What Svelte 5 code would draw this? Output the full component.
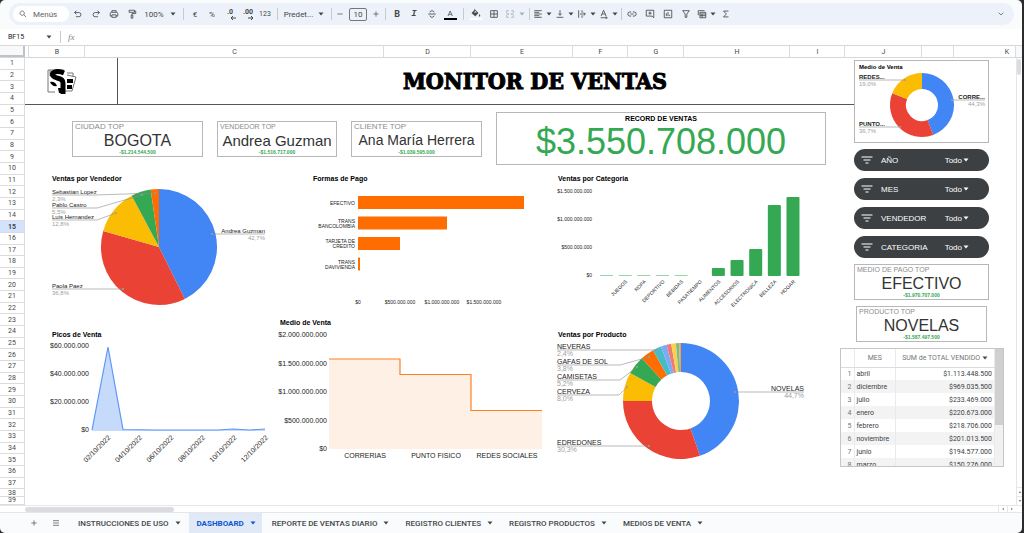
<script lang="ts">
    type Slice = { value: number; color: string };
    type Callout = { name: string; pct: string; points: number[][]; right?: boolean };

    const columns = [
        ["", 4], ["B", 56], ["C", 299], ["D", 87], ["E", 102], ["F", 55],
        ["G", 56], ["H", 106], ["I", 55], ["J", 77], ["", 32], ["K", 62],
    ];
    const rows = Array.from({ length: 39 }, (_, i) => i + 1);

    const kpis = [
        { label: "CIUDAD TOP", value: "BOGOTA", note: "-$1.214.544.500" },
        { label: "VENDEDOR TOP", value: "Andrea Guzman", note: "-$1.516.717.000", tight: true },
        { label: "CLIENTE TOP", value: "Ana María Herrera", note: "-$1.039.595.000", small: true },
    ];

    const sellers: Slice[] = [
        { value: 42.7, color: "#4285f4" },
        { value: 36.8, color: "#ea4335" },
        { value: 12.8, color: "#fbbc04" },
        { value: 5.5, color: "#34a853" },
        { value: 2.3, color: "#ff6d01" },
    ];
    const sellerCallouts: Callout[] = [
        { name: "Sebastian Lopez", pct: "2,3%", points: [[2, 10], [45, 10], [105, 8]] },
        { name: "Pablo Castro", pct: "5,5%", points: [[2, 23], [47, 23], [92, 10]] },
        { name: "Luis Hernandez", pct: "12,8%", points: [[2, 35], [47, 35], [66, 28]] },
        { name: "Paola Paez", pct: "36,8%", points: [[2, 104], [73, 104]] },
        { name: "Andrea Guzman", pct: "42,7%", points: [[215, 49], [162, 49]], right: true },
    ];

    const products: Slice[] = [
        { value: 44.7, color: "#4285f4" },
        { value: 30.3, color: "#ea4335" },
        { value: 8, color: "#fbbc04" },
        { value: 5.2, color: "#34a853" },
        { value: 3.8, color: "#ff6d01" },
        { value: 2.4, color: "#46bdc6" },
        { value: 1.6, color: "#7baaf7" },
        { value: 1.3, color: "#f07b72" },
        { value: 1.3, color: "#fcd04f" },
        { value: 0.9, color: "#71c287" },
        { value: 0.5, color: "#ff994d" },
    ];
    const productCallouts: Callout[] = [
        { name: "NEVERAS", pct: "2,4%", points: [[1, 9], [102, 9]] },
        { name: "GAFAS DE SOL", pct: "3,8%", points: [[1, 24], [64, 24], [93, 16]] },
        { name: "CAMISETAS", pct: "5,2%", points: [[1, 39], [64, 39], [81, 26]] },
        { name: "CERVEZA", pct: "8,0%", points: [[1, 54], [63, 54], [71, 46]] },
        { name: "EDREDONES", pct: "30,3%", points: [[1, 105], [93, 105]] },
        { name: "NOVELAS", pct: "44,7%", points: [[248, 51], [179, 51]], right: true },
    ];

    const channels: Slice[] = [
        { value: 44.3, color: "#4285f4" },
        { value: 36.7, color: "#ea4335" },
        { value: 19, color: "#fbbc04" },
    ];
    const channelCallouts: Callout[] = [
        { name: "REDES...", pct: "19,0%", points: [[4, 7], [50, 7]] },
        { name: "PUNTO...", pct: "36,7%", points: [[4, 54], [45, 54]] },
        { name: "CORRE...", pct: "44,3%", points: [[130, 27], [97, 27]], right: true },
    ];

    const payments = [
        { lines: ["EFECTIVO"], width: 166 },
        { lines: ["TRANS", "BANCOLOMBIA"], width: 89 },
        { lines: ["TARJETA DE", "CREDITO"], width: 42 },
        { lines: ["TRANS", "DAVIVIENDA"], width: 2 },
    ];

    const categories = [
        { name: "", h: 0.5 },
        { name: "JUEGOS", h: 0.5 },
        { name: "ROPA", h: 0.5 },
        { name: "DEPORTIVO", h: 0.5 },
        { name: "BEBIDAS", h: 0.5 },
        { name: "PASATIEMPO", h: 0 },
        { name: "ALIMENTOS", h: 8 },
        { name: "ACCESORIOS", h: 16 },
        { name: "ELECTRONICA", h: 27 },
        { name: "BELLEZA", h: 71 },
        { name: "HOGAR", h: 79 },
    ];

    const dates = ["02/10/2022", "04/10/2022", "06/10/2022", "08/10/2022", "10/10/2022", "12/10/2022"];
    const peaks = "42,89 58,6 73,88.5 105,89 168,89 183,88 200,89 215,88";

    const filters = ["AÑO", "MES", "VENDEDOR", "CATEGORIA"];

    const months = [
        ["abril", "$1.113.448.500"],
        ["diciembre", "$969.035.500"],
        ["julio", "$233.469.000"],
        ["enero", "$220.673.000"],
        ["febrero", "$218.706.000"],
        ["noviembre", "$201.013.500"],
        ["junio", "$194.577.000"],
        ["marzo", "$150.276.000"],
    ];

    const tabs = [
        "INSTRUCCIONES DE USO",
        "DASHBOARD",
        "REPORTE DE VENTAS DIARIO",
        "REGISTRO CLIENTES",
        "REGISTRO PRODUCTOS",
        "MEDIOS DE VENTA",
    ];
    let activeTab = $state("DASHBOARD");

    // toolbar glyphs on a 24 unit grid
    const icons: Record<string, string> = {
        undo: "M8 4L4 8.500l4 4.500M4 8.500h10a5 5 0 0 1 0 10H7",
        redo: "M16 4l4 4.500-4 4.500M20 8.500H10a5 5 0 0 0 0 10h7",
        print: "M7 8V4h10v4M7 17H3v-6q0-3 3-3h12q3 0 3 3v6h-4M7 14h10v6H7z",
        paint: "M5 3h13v5H5zM18 5h3v6h-9v4M10 15h4v7h-4z",
        strike: "M3 12h18M17 8q-1-4-5-4t-5 4M7 16q1 4 5 4t5-4",
        borders: "M4 4h16v16H4zM12 4v16M4 12h16",
        merge: "M9 4H4v5M15 4h5v5M9 20H4v-5M15 20h5v-5M3 12h6M21 12h-6M7 10l2 2-2 2M17 10l-2 2 2 2",
        align: "M3 4h18M3 8h12M3 12h18M3 16h12M3 20h18",
        valign: "M4 20h16M12 3v12M8 11l4 4 4-4",
        wrap: "M4 3v18M12 3v6M12 15v6M7 12h13M16 8l4 4-4 4",
        rotate: "M5 17l6-14 6 14M7 12h8M4 21h15M16 18l4 3-4 2",
        link: "M10 7H7a5 5 0 0 0 0 10h3M14 7h3a5 5 0 0 1 0 10h-3M8 12h8",
        comment: "M3 3h18v18l-4-4H3zM12 6v8M8 10h8",
        chart: "M3 3h18v18H3zM8 17v-7M12 17V7M16 17v-3",
        filter: "M4 4h16l-6 8v8h-4v-8z",
        views: "M3 15V4h15M7 8h14v13H7zM7 12h14M7 16h14M12 12v9",
        sum: "M18 5H6l7 7-7 7h12",
        plus: "M12 4v16M4 12h16",
        minus: "M4 12h16",
        menu: "M3 5h18M3 12h18M3 19h18",
        search: "M9.500 3a6.500 6.500 0 1 0 .1 0M14 14l7 7",
        chevron: "M5 8l7 7 7-7",
    };

    function arc(cx: number, cy: number, r: number, hole: number, list: Slice[]) {
        const total = list.reduce((sum, s) => sum + s.value, 0);
        let from = 0;
        return list.map((s) => {
            const a = (from / total) * Math.PI * 2;
            from += s.value;
            const b = (from / total) * Math.PI * 2;
            const big = b - a > Math.PI ? 1 : 0;
            const at = (radius: number, angle: number) =>
                `${(cx + radius * Math.sin(angle)).toFixed(2)} ${(cy - radius * Math.cos(angle)).toFixed(2)}`;
            const d = `M${at(r, a)}A${r} ${r} 0 ${big} 1 ${at(r, b)}L${at(hole, b)}A${hole} ${hole} 0 ${big} 0 ${at(hole, a)}Z`;
            return { d, color: s.color };
        });
    }
</script>

{#snippet icon(name: string)}
    <svg class="icon" viewBox="0 0 24 24" aria-hidden="true"><path d={icons[name]} /></svg>
{/snippet}

{#snippet caret()}
    <svg class="caret" viewBox="0 0 6 4" aria-hidden="true"><path d="M0.500 0.500h5L3 3.500z" /></svg>
{/snippet}

{#snippet tool(name: string, label: string)}
    <button class="tool" aria-label={label}>{@render icon(name)}</button>
{/snippet}

{#snippet dropTool(name: string, label: string)}
    <button class="drop" aria-label={label}>{@render icon(name)}{@render caret()}</button>
{/snippet}

{#snippet pie(cx: number, cy: number, r: number, hole: number, slices: Slice[], callouts: Callout[])}
    {#each arc(cx, cy, r, hole, slices) as slice}
        <path d={slice.d} fill={slice.color} />
    {/each}
    {#each callouts as c}
        {@const start = c.points[0]}
        {@const end = c.points[c.points.length - 1]}
        <polyline class="leader" points={c.points.join(" ")} />
        <circle cx={end[0]} cy={end[1]} r="1" fill="#9e9e9e" />
        <text class="name" class:end={c.right} x={start[0]} y={start[1] - 1}>{c.name}</text>
        <text class="pct" class:end={c.right} x={start[0]} y={start[1] + 6}>{c.pct}</text>
    {/each}
{/snippet}

<div class="window">
    <header class="toolbar">
        <label class="search">
            {@render icon("search")}
            <input type="text" placeholder="Menús" aria-label="Menús" />
        </label>
        {@render tool("undo", "Deshacer")}
        {@render tool("redo", "Rehacer")}
        {@render tool("print", "Imprimir")}
        {@render tool("paint", "Copiar formato")}
        <button class="zoom">100%{@render caret()}</button>
        <span class="sep"></span>
        <button class="tool narrow">€</button>
        <button class="tool">%</button>
        <button class="tool dec">.0<svg viewBox="0 0 6 4" aria-hidden="true"><path d="M6 2H1M3 0L1 2l2 2" /></svg></button>
        <button class="tool dec">.00<svg viewBox="0 0 6 4" aria-hidden="true"><path d="M0 2h5M3 0l2 2-2 2" /></svg></button>
        <button class="tool narrow num">123</button>
        <span class="sep"></span>
        <button class="font">Predet...{@render caret()}</button>
        <span class="sep"></span>
        <button class="step" aria-label="Reducir">{@render icon("minus")}</button>
        <input class="size" type="text" value="10" aria-label="Tamaño de fuente" />
        <button class="step" aria-label="Aumentar">{@render icon("plus")}</button>
        <span class="sep"></span>
        <button class="tool narrow letter">B</button>
        <button class="tool letter italic">I</button>
        {@render tool("strike", "Tachado")}
        <button class="tool color"><span>A</span></button>
        <span class="sep"></span>
        <button class="tool" aria-label="Color de relleno">
            <svg class="fill" viewBox="0 0 24 24" aria-hidden="true">
                <path d="M8 1l9 9-6.500 6.500L3 10l6-6zM19 12q3 4 0 5t0-5z" fill="#444746" />
                <path d="M7 9h7l-3-3z" fill="#edf2fa" />
                <path d="M0 20h24v4H0z" fill="#fff" />
            </svg>
        </button>
        {@render tool("borders", "Bordes")}
        <button class="merge" aria-label="Combinar celdas" disabled>{@render icon("merge")}{@render caret()}</button>
        <span class="sep thin"></span>
        {@render dropTool("align", "Alineación horizontal")}
        {@render dropTool("valign", "Alineación vertical")}
        {@render dropTool("wrap", "Ajuste de texto")}
        {@render dropTool("rotate", "Rotación de texto")}
        <span class="sep thin"></span>
        {@render tool("link", "Insertar enlace")}
        {@render tool("comment", "Insertar comentario")}
        {@render tool("chart", "Insertar gráfico")}
        {@render tool("filter", "Crear un filtro")}
        {@render dropTool("views", "Vistas de tabla")}
        {@render tool("sum", "Funciones")}
        <button class="tool collapse" aria-label="Ocultar menús">{@render icon("chevron")}</button>
    </header>

    <div class="formula">
        <input class="cell-name" type="text" value="BF15" aria-label="Cuadro de nombre" />
        {@render caret()}
        <span class="sep"></span>
        <label class="fx" for="fx">fx</label>
        <input id="fx" type="text" />
    </div>

    <div class="columns">
        <div class="corner"></div>
        <div class="cols">
            {#each columns as [name, size]}
                <div class="col" class:last={name === "K"} style="flex-grow: {size}">{name}</div>
            {/each}
        </div>
        <div class="gutter"></div>
    </div>

    <div class="sheet">
        <div class="rows">
            {#each rows as n}
                <div class="row" class:selected={n === 15} class:short={n > 37}>{n}</div>
            {/each}
        </div>

        <main>
            <div class="band">
                <div class="logo">
                    <svg viewBox="0 0 30 26" aria-label="SF">
                        <path d="M1 1L17 1M1 1v22h7M15 22h10l4-14-9-2M20 4h6v4M3 1v6" fill="none" stroke="#777" />
                        <path d="M17 4q-7-3-11 0-2 3 4 5 6 1 6 5v11" fill="none" stroke="#000" stroke-width="5" />
                        <path d="M3 13q5-1 7 4-5 1-7-4zM20 10h6v4h-6zM20 16h5v4h-5zM11 19h4v5h-3z" />
                    </svg>
                </div>
                <h1>MONITOR DE VENTAS</h1>
            </div>

            <div class="kpis">
                {#each kpis as k}
                    <section class="card">
                        <h2 class:tight={k.tight}>{k.label}</h2>
                        <p class="value" class:medium={k.tight} class:small={k.small}>{k.value}</p>
                        <p class="note">{k.note}</p>
                    </section>
                {/each}
                <section class="card record">
                    <h2>RECORD DE VENTAS</h2>
                    <p>$3.550.708.000</p>
                </section>
            </div>

            <div class="charts">
                <section class="chart small">
                    <h3>Ventas por Vendedor</h3>
                    <svg viewBox="0 0 228 132">
                        {@render pie(109, 62, 58, 0, sellers, sellerCallouts)}
                    </svg>
                </section>

                <section class="chart tiny formas">
                    <h3>Formas de Pago</h3>
                    <svg viewBox="0 0 278 132">
                        {#each payments as p, i}
                            {@const y = 11 + i * 20.5}
                            <rect x="80" {y} width={p.width} height="13" rx="0.500" fill="#ff6d01" />
                            {#each p.lines as line, j}
                                <text class="end" x="77" y={y + 8.5 + (j * 5 - (p.lines.length - 1) * 2.5)}>{line}</text>
                            {/each}
                        {/each}
                        {#each ["$0", "$500.000.000", "$1.000.000.000", "$1.500.000.000"] as tick, i}
                            <text class="mid" x={80 + i * 42} y="119">{tick}</text>
                        {/each}
                    </svg>
                </section>

                <section class="chart tiny">
                    <h3>Ventas por Categoria</h3>
                    <svg viewBox="0 0 284 132">
                        {#each ["$1.500.000.000", "$1.000.000.000", "$500.000.000", "$0"] as tick, i}
                            <text class="end" x="36" y={8 + i * 28}>{tick}</text>
                        {/each}
                        {#each categories as c, i}
                            {@const x = 44 + i * 18.65}
                            <rect {x} y={91 - c.h} width="13" height={c.h} rx={c.h > 1 ? 1 : 0} fill="#34a853" />
                            <text class="end" transform="translate({x + 9} 97) rotate(-45)">{c.name}</text>
                        {/each}
                    </svg>
                </section>

                <section class="chart lower">
                    <h3>Picos de Venta</h3>
                    <svg viewBox="0 0 228 130">
                        {#each ["$60.000.000", "$40.000.000", "$20.000.000", "$0"] as tick, i}
                            <text class="end" x="39" y={7 + i * 28}>{tick}</text>
                        {/each}
                        <polygon points="{peaks} 215,90 42,90" fill="#c6dafc" />
                        <polyline points={peaks} fill="none" stroke="#5c97f6" stroke-width="1.200" />
                        {#each dates as date, i}
                            <text class="end" transform="translate({61 + i * 31.5} 97) rotate(-45)">{date}</text>
                        {/each}
                    </svg>
                </section>

                <section class="chart">
                    <h3>Medio de Venta</h3>
                    <svg viewBox="0 0 278 135">
                        {#each ["$2.000.000.000", "$1.500.000.000", "$1.000.000.000", "$500.000.000", "$0"] as tick, i}
                            <text class="end" x="49" y={8 + i * 28.5}>{tick}</text>
                        {/each}
                        <path d="M51 120V30h71v15.500h71v36h71V120z" fill="#fff0e6" />
                        <path d="M51 30h71v15.500h71v36h71" fill="none" stroke="#ff7f20" stroke-width="1.200" />
                        {#each ["CORRERIAS", "PUNTO FISICO", "REDES SOCIALES"] as name, i}
                            <text class="mid" x={87 + i * 71} y="129">{name}</text>
                        {/each}
                    </svg>
                </section>

                <section class="chart lower">
                    <h3>Ventas por Producto</h3>
                    <svg viewBox="0 0 284 130">
                        {@render pie(125, 60, 58, 29, products, productCallouts)}
                    </svg>
                </section>
            </div>
        </main>

        <aside>
            <section class="card chart small channel">
                <h3>Medio de Venta</h3>
                <svg viewBox="0 0 133 70">
                    {@render pie(67, 32, 32, 16, channels, channelCallouts)}
                </svg>
            </section>

            <div class="filters">
                {#each filters as f}
                    <button>
                        <svg viewBox="0 0 12 8" aria-hidden="true"><path d="M0.500 1h11M2.500 4h7M4.500 7h3" /></svg>
                        <span class="field">{f}</span>
                        <span class="pick">Todo{@render caret()}</span>
                    </button>
                {/each}
            </div>

            <section class="card">
                <h2 class="tight">MEDIO DE PAGO TOP</h2>
                <p class="value">EFECTIVO</p>
                <p class="note">-$1.970.707.000</p>
            </section>
            <section class="card product">
                <h2 class="tight">PRODUCTO TOP</h2>
                <p class="value">NOVELAS</p>
                <p class="note">-$1.587.497.500</p>
            </section>

            <div class="months">
                <table>
                    <thead>
                        <tr><th></th><th>MES</th><th class="total">SUM de TOTAL VENDIDO {@render caret()}</th></tr>
                    </thead>
                    <tbody>
                        {#each months as [month, total], i}
                            <tr><td class="index">{i + 1}</td><td>{month}</td><td class="total">{total}</td></tr>
                        {/each}
                    </tbody>
                </table>
                <div class="track"><div class="thumb"></div></div>
            </div>
        </aside>

        <div class="vscroll">
            <div class="thumb"></div>
            <button aria-label="Subir"><svg viewBox="0 0 6 4"><path d="M1 3h4L3 1z" /></svg></button>
            <button aria-label="Bajar"><svg viewBox="0 0 6 4"><path d="M1 1h4L3 3z" /></svg></button>
        </div>
    </div>

    <div class="hscroll">
        <div class="thumb"></div>
        <button aria-label="Izquierda"><svg viewBox="0 0 4 6"><path d="M3 1v4L1 3z" /></svg></button>
        <button aria-label="Derecha"><svg viewBox="0 0 4 6"><path d="M1 1v4l2-2z" /></svg></button>
    </div>

    <nav>
        <button class="sheet-tool" aria-label="Añadir hoja">{@render icon("plus")}</button>
        <button class="sheet-tool" aria-label="Todas las hojas">{@render icon("menu")}</button>
        {#each tabs as tab}
            <button class="tab" class:active={tab === activeTab} onclick={() => (activeTab = tab)}>
                {tab}{@render caret()}
            </button>
        {/each}
    </nav>
</div>

<style>
    :global(body) {
        margin: 0;
        background: #2b2c2e;
    }

    .window {
        min-height: 100vh;
        margin-right: 2px;
        box-sizing: border-box;
        display: flex;
        flex-direction: column;
        overflow: hidden;
        border-radius: 5px;
        background: #f9fbfd;
        color: #444746;
        font-family: Roboto, "Liberation Sans", sans-serif;
        font-size: 8px;
    }

    .window * {
        box-sizing: border-box;
    }

    button,
    input {
        min-width: 0;
        margin: 0;
        padding: 0;
        border: 0;
        background: none;
        color: inherit;
        font: inherit;
    }

    button {
        display: flex;
        align-items: center;
        justify-content: center;
        cursor: pointer;
    }

    h1,
    h2,
    h3,
    p {
        margin: 0;
        font-weight: normal;
    }

    svg {
        display: block;
        flex: none;
    }

    .icon {
        width: 10px;
        height: 10px;
        fill: none;
        stroke: #444746;
        stroke-width: 2;
    }

    .caret {
        width: 6px;
        height: 4px;
        fill: #444746;
    }

    /* toolbar */
    .toolbar {
        display: flex;
        align-items: center;
        height: 22px;
        margin: 3px 8px 4px 9px;
        padding: 0 4px;
        border-radius: 11px;
        background: #edf2fa;
    }

    .toolbar button {
        height: 16px;
    }

    .search {
        display: flex;
        align-items: center;
        gap: 6px;
        width: 56px;
        height: 16px;
        padding-left: 6px;
        border-radius: 8px;
        background: #fff;
    }

    .search .icon {
        width: 8px;
        height: 8px;
    }

    .search input {
        width: 32px;
    }

    .search input::placeholder {
        color: #5f6368;
        opacity: 1;
    }

    .tool {
        width: 18px;
    }

    .narrow {
        width: 16px;
    }

    .zoom {
        width: 38px;
        gap: 6px;
    }

    .font {
        width: 46px;
        gap: 5px;
    }

    .sep {
        flex: none;
        width: 8px;
        height: 12px;
        background: linear-gradient(#c7cbd1, #c7cbd1) center / 1px 100% no-repeat;
    }

    .thin {
        width: 4px;
    }

    .dec {
        flex-direction: column;
        font-weight: bold;
        font-size: 7px;
        line-height: 7px;
    }

    .dec svg {
        width: 6px;
        height: 4px;
        margin-left: 6px;
        fill: none;
        stroke: #444746;
    }

    .num {
        font-size: 7px;
    }

    .step {
        width: 10px;
    }

    .step .icon {
        width: 8px;
        height: 8px;
    }

    .size {
        width: 18px;
        height: 13px;
        margin: 0 4px;
        border: 1px solid #747775;
        border-radius: 2px;
        text-align: center;
    }

    .letter {
        font-weight: bold;
        font-size: 9px;
    }

    .italic {
        font-family: "Liberation Mono", monospace;
        font-style: italic;
    }

    .color span {
        width: 13px;
        border-bottom: 2px solid #000;
        font-size: 8px;
        line-height: 9px;
    }

    .fill {
        width: 12px;
        height: 12px;
    }

    .merge {
        width: 24px;
        gap: 4px;
        opacity: 0.4;
    }

    .drop {
        width: 22px;
        gap: 3px;
    }

    .collapse {
        margin-left: auto;
    }

    .collapse .icon {
        width: 8px;
    }

    /* formula bar */
    .formula {
        display: flex;
        align-items: center;
        height: 16px;
        padding-left: 8px;
        background: #fff;
        font-size: 7px;
    }

    .cell-name {
        width: 38px;
        color: #202124;
    }

    .formula .sep {
        margin: 0 4px;
    }

    .fx {
        width: 16px;
        color: #80868b;
        font: italic 9px "Liberation Serif", serif;
    }

    #fx {
        flex: 1;
    }

    /* grid headers */
    .columns {
        display: flex;
        height: 13px;
        border-top: 1px solid #d5d7d9;
        border-bottom: 1px solid #d5d7d9;
        background: #fff;
        font-size: 7px;
        line-height: 12px;
        text-align: center;
    }

    .corner {
        width: 25px;
        border-right: 2px solid #c0c2c4;
        border-bottom: 2px solid #c0c2c4;
        background: #f8f9fa;
    }

    .cols {
        flex: 1;
        display: flex;
    }

    .col {
        flex: 1 1 0;
        min-width: 0;
        box-shadow: inset -1px 0 #dadce0;
    }

    .col.last {
        text-indent: 44px;
    }

    .gutter {
        width: 6px;
        background: #f8f9fa;
    }

    .sheet {
        flex: 1;
        display: flex;
        background: #fff;
    }

    .rows {
        display: flex;
        flex-direction: column;
        width: 25px;
        border-right: 1px solid #dadce0;
        font-size: 7px;
    }

    .row {
        flex: 12 1 0;
        min-height: 0;
        display: flex;
        align-items: center;
        justify-content: center;
        box-shadow: inset 0 -1px #dadce0;
        line-height: 7px;
    }

    .row.short {
        flex-grow: 8;
    }

    .selected {
        background: #d3e3fd;
        font-weight: bold;
    }

    main,
    aside {
        font-family: "Liberation Sans", Arial, sans-serif;
    }

    main {
        flex: 1;
        min-width: 0;
    }

    .band {
        display: flex;
        height: 47px;
        margin-right: -14px;
        border-bottom: 1px solid #555;
    }

    .logo {
        width: 93px;
        padding: 11px 0 0 22px;
        border-right: 1px solid #555;
    }

    .logo svg {
        width: 30px;
        height: 26px;
    }

    h1 {
        flex: 1;
        padding-left: 98px;
        color: #000;
        font-family: "DejaVu Serif Condensed", "DejaVu Serif", serif;
        font-size: 23px;
        font-weight: bold;
        line-height: 46px;
        text-align: center;
        white-space: nowrap;
        -webkit-text-stroke: 1px #000;
    }

    .kpis {
        display: grid;
        grid-template-columns: 131fr 120fr 131fr 330fr;
        align-items: center;
        gap: 14px;
        margin: 7px 14px 8px 47px;
    }

    .card {
        height: 36px;
        border: 1px solid #b7b7b7;
        background: #fff;
        text-align: center;
        white-space: nowrap;
    }

    .card h2 {
        padding-left: 2px;
        color: #8c8c8c;
        font-size: 8px;
        line-height: 10px;
        text-align: left;
    }

    .card h2.tight {
        font-size: 7px;
    }

    .value {
        color: #333;
        font-size: 16px;
        line-height: 17px;
    }

    .value.medium {
        font-size: 15px;
    }

    .value.small {
        font-size: 14px;
    }

    .note {
        color: #34a853;
        font-size: 5px;
        font-weight: bold;
        line-height: 6px;
    }

    .card.record {
        height: 53px;
    }

    .record h2 {
        padding: 0;
        color: #000;
        font-size: 7px;
        font-weight: bold;
        line-height: 11px;
        text-align: center;
    }

    .record p {
        color: #34a853;
        font-size: 36px;
        line-height: 36px;
    }

    /* charts */
    .charts {
        display: grid;
        grid-template-columns: 228fr 278fr 284fr;
        align-items: start;
        padding-left: 25px;
    }

    .chart {
        min-width: 0;
    }

    .chart h3 {
        padding-left: 2px;
        color: #000;
        font-size: 7px;
        font-weight: bold;
        line-height: 12px;
        text-align: left;
    }

    .formas h3 {
        padding-left: 35px;
    }

    .lower {
        padding-top: 12px;
    }

    .chart svg {
        width: 100%;
        height: auto;
        overflow: visible;
    }

    text {
        fill: #222;
        font-size: 7px;
    }

    .small text {
        font-size: 6px;
    }

    .tiny text {
        font-size: 5px;
    }

    text.pct {
        fill: #9e9e9e;
    }

    .end {
        text-anchor: end;
    }

    .mid {
        text-anchor: middle;
    }

    .leader {
        fill: none;
        stroke: #8c8c8c;
        stroke-width: 0.6;
    }

    /* right side */
    aside {
        display: flex;
        flex-direction: column;
        gap: 6px;
        width: 176px;
        padding: 2px 27px 0 14px;
    }

    .card.channel {
        position: relative;
        height: 83px;
    }

    .channel h3 {
        padding-left: 4px;
        font-size: 6px;
    }

    .channel .name {
        font-weight: bold;
    }

    .filters {
        display: flex;
        flex-direction: column;
        gap: 7px;
    }

    .filters button {
        height: 22px;
        padding: 0 20px 0 7px;
        border-radius: 11px;
        background: #3c4043;
        color: #fff;
    }

    .filters button > svg {
        width: 12px;
        height: 8px;
        stroke: #fff;
    }

    .field {
        flex: 1;
        padding-left: 8px;
        text-align: left;
    }

    .pick {
        display: flex;
        align-items: center;
        gap: 1px;
    }

    .pick .caret {
        fill: #fff;
    }

    .product {
        margin: 0 2px;
    }

    .months {
        display: flex;
        height: 119px;
        margin: 0 -15px 0 -14px;
        overflow: hidden;
        border: 1px solid #c4c7c5;
    }

    table {
        flex: 1;
        align-self: flex-start;
        border-collapse: collapse;
        font-family: Roboto, sans-serif;
        font-size: 7px;
    }

    th {
        height: 18px;
        padding: 0;
        border-bottom: 1px solid #dadce0;
        border-right: 1px solid #e8eaed;
        color: #757575;
        font-weight: normal;
        white-space: nowrap;
    }

    th .caret {
        display: inline-block;
    }

    td {
        height: 13px;
        padding: 0 2px;
        border-right: 1px solid #e8eaed;
        color: #3c4043;
    }

    tbody tr:nth-child(even) {
        background: #f3f3f3;
    }

    td.index {
        width: 13px;
        color: #757575;
        text-align: right;
    }

    td.total {
        width: 99px;
        text-align: right;
    }

    .track {
        width: 8px;
        background: #f1f1f1;
    }

    .track .thumb {
        height: 76px;
        background: #d0d0d0;
    }

    /* scroll bars */
    .vscroll {
        display: flex;
        flex-direction: column;
        width: 6px;
        border-left: 1px solid #e4e6e8;
    }

    .vscroll .thumb {
        width: 4px;
        height: 16px;
        margin: 1px 0 auto;
        border-radius: 2px;
        background: #dadce0;
    }

    .vscroll button {
        height: 9px;
        border-top: 1px solid #e4e6e8;
    }

    .vscroll svg,
    .hscroll svg {
        width: 4px;
        height: 4px;
        fill: #5f6368;
    }

    .hscroll {
        display: flex;
        align-items: center;
        height: 8px;
        padding: 0 6px 0 25px;
        border-top: 1px solid #e4e6e8;
        border-bottom: 1px solid #e4e6e8;
        background: #fff;
    }

    .hscroll .thumb {
        width: 15%;
        height: 5px;
        margin-right: auto;
        border-radius: 3px;
        background: #dadce0;
    }

    .hscroll button {
        width: 9px;
        height: 6px;
        border-left: 1px solid #e4e6e8;
    }

    /* sheet tabs */
    nav {
        display: flex;
        height: 20px;
        padding-left: 24px;
    }

    .sheet-tool {
        width: 20px;
        margin-right: 2px;
    }

    .sheet-tool .icon {
        width: 8px;
        height: 8px;
    }

    .tab {
        gap: 6px;
        margin-left: 2px;
        padding: 0 6px 0 8px;
        font-weight: 500;
        white-space: nowrap;
    }

    .tab.active {
        background: #e1e9f7;
        color: #0b57d0;
        font-weight: bold;
    }

    .tab.active .caret {
        fill: #0b57d0;
    }
</style>
